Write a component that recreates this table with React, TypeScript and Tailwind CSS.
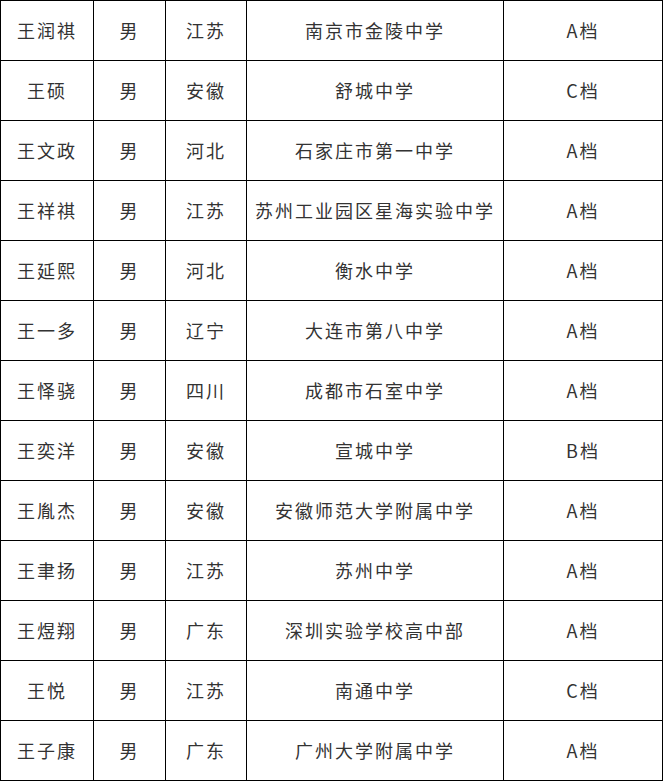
const rows: [string, string, string, string, string][] = [
  ["王润祺", "男", "江苏", "南京市金陵中学", "A档"],
  ["王硕", "男", "安徽", "舒城中学", "C档"],
  ["王文政", "男", "河北", "石家庄市第一中学", "A档"],
  ["王祥祺", "男", "江苏", "苏州工业园区星海实验中学", "A档"],
  ["王延熙", "男", "河北", "衡水中学", "A档"],
  ["王一多", "男", "辽宁", "大连市第八中学", "A档"],
  ["王怿骁", "男", "四川", "成都市石室中学", "A档"],
  ["王奕洋", "男", "安徽", "宣城中学", "B档"],
  ["王胤杰", "男", "安徽", "安徽师范大学附属中学", "A档"],
  ["王聿扬", "男", "江苏", "苏州中学", "A档"],
  ["王煜翔", "男", "广东", "深圳实验学校高中部", "A档"],
  ["王悦", "男", "江苏", "南通中学", "C档"],
  ["王子康", "男", "广东", "广州大学附属中学", "A档"],
];

const App = () => {
  return (
    <div className="bg-white w-[663px]">
      <div
        className="grid grid-cols-[93px_72px_81px_257px_159px] border-t border-l border-black text-[18px] tracking-[2px] text-[#333]"
        style={{ fontFamily: '"Noto Sans CJK SC", "Noto Sans", sans-serif' }}
      >
        {rows.map((row, i) =>
          row.map((cell, j) => (
            <div
              key={`${i}-${j}`}
              className="h-[60px] flex items-center justify-center border-r border-b border-black"
            >
              {cell}
            </div>
          ))
        )}
      </div>
    </div>
  );
};

export default App;
